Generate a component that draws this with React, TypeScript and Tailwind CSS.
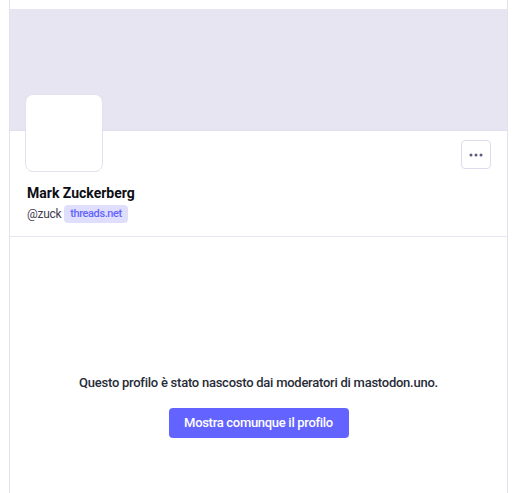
export default function App() {
  return (
    <div className="h-[493px] overflow-hidden bg-white pl-[9px] font-['Roboto',sans-serif]">
      <div className="h-full w-[499px] border-x border-[#e2e1ee] pt-[9px]">
        {/* header image */}
        <div className="h-[122px] border-b border-[#e0dfee] bg-[#e6e5f1]" />

        <div className="border-b border-[#e6e5f1] px-[15px] pb-[13px]">
          <div className="flex items-start justify-between">
            <div className="-mt-[37px] h-[78px] w-[78px] rounded-[8px] border border-[#e2e1ee] bg-white" />
            <button className="mr-[1px] mt-[9px] flex h-[29px] w-[30px] items-center justify-center rounded-[4px] border border-[#dddcec] bg-white">
              <svg width="14" height="4" viewBox="0 0 14 4" fill="#5b5d7a">
                <circle cx="2" cy="2" r="1.5" />
                <circle cx="7" cy="2" r="1.5" />
                <circle cx="12" cy="2" r="1.5" />
              </svg>
            </button>
          </div>

          <div className="mt-[11px] pl-[2px]">
            <h1 className="text-[14px] font-bold leading-[20px] text-[#0d0d14]">Mark Zuckerberg</h1>
            <div className="mt-[2px] flex items-center gap-[3px]">
              <span className="text-[12px] leading-[18px] tracking-[-0.3px] text-[#3f4150]">@zuck</span>
              <span className="rounded-[4px] bg-[#dfdffd] px-[6px] py-[1px] text-[11px] font-medium leading-[16px] tracking-[-0.4px] text-[#6364ff]">
                threads.net
              </span>
            </div>
          </div>
        </div>

        <div className="flex flex-col items-center pt-[136px]">
          <p className="text-[13px] font-medium leading-[20px] tracking-[-0.25px] text-[#282c37]">
            Questo profilo è stato nascosto dai moderatori di mastodon.uno.
          </p>
          <button className="mt-[15px] h-[30px] w-[180px] whitespace-nowrap rounded-[4px] bg-[#6364ff] text-[13px] font-medium tracking-[-0.3px] text-white">
            Mostra comunque il profilo
          </button>
        </div>
      </div>
    </div>
  );
}
